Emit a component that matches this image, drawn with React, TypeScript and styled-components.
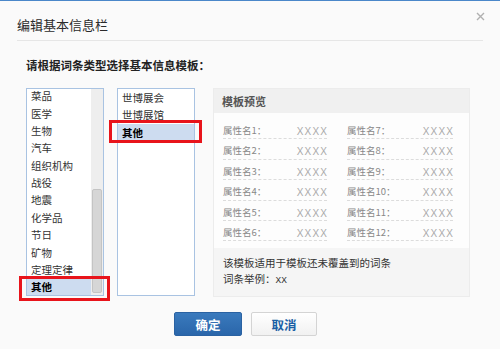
import React from "react";
import styled, { createGlobalStyle } from "styled-components";

const GlobalStyle = createGlobalStyle`
  html, body {
    margin: 0;
    padding: 0;
    background: #fafafa;
  }
  body {
    font-family: "Noto Sans CJK SC", "Liberation Sans", sans-serif;
  }
`;

const leftItems = [
  "菜品",
  "医学",
  "生物",
  "汽车",
  "组织机构",
  "战役",
  "地震",
  "化学品",
  "节日",
  "矿物",
  "定理定律",
  "其他",
];

const midItems = ["世博展会", "世博展馆", "其他"];

const App = () => {
  const attrs = Array.from({ length: 12 }, (_, i) => `属性名${i + 1}：`);

  return (
    <>
      <GlobalStyle />
      <Dialog>
        <Header>
          <Title>编辑基本信息栏</Title>
        </Header>
        <CloseButton aria-label="关闭">
          <svg width="9" height="9" viewBox="0 0 9 9">
            <path d="M1 1L8 8M8 1L1 8" stroke="#b0b0b0" strokeWidth="1.4" />
          </svg>
        </CloseButton>

        <Body>
          <Subtitle>请根据词条类型选择基本信息模板：</Subtitle>
          <Panels>
            <ListBox $gap={13}>
              <ListItems>
                <ItemsInner $shift={-1.7}>
                  {leftItems.map((item, i) => (
                    <Item key={item} $selected={i === leftItems.length - 1}>
                      {item}
                    </Item>
                  ))}
                </ItemsInner>
              </ListItems>
              <ScrollTrack>
                <ScrollThumb />
              </ScrollTrack>
              <Marker $left={-8} $top={187} $w={91} $h={25} />
            </ListBox>

            <ListBox $gap={18}>
              <ListItems>
                <ItemsInner $shift={0}>
                  {midItems.map((item, i) => (
                    <Item key={item} $selected={i === 2}>
                      {item}
                    </Item>
                  ))}
                </ItemsInner>
              </ListItems>
              <Marker $left={-9} $top={31} $w={93} $h={23} />
            </ListBox>

            <Preview>
              <PreviewHead>模板预览</PreviewHead>
              <AttrGrid>
                {attrs.map((a) => (
                  <AttrRow key={a}>
                    <AttrLabel>{a}</AttrLabel>
                    <AttrValue>XXXX</AttrValue>
                  </AttrRow>
                ))}
              </AttrGrid>
              <PreviewNote>
                <div>该模板适用于模板还未覆盖到的词条</div>
                <div>
                  词条举例：<Mono>XX</Mono>
                </div>
              </PreviewNote>
            </Preview>
          </Panels>
        </Body>

        <Footer>
          <Button $primary $w={68}>
            确定
          </Button>
          <Button $w={66}>取消</Button>
        </Footer>
      </Dialog>
    </>
  );
};

export default App;

const Dialog = styled.div`
  position: relative;
  width: 500px;
  height: 349px;
  box-sizing: border-box;
  border-top: 1px solid #4a87c9;
  background: #fafafa;
`;

const Header = styled.div`
  margin: 0 17px;
  padding-top: 9px;
  height: 30px;
  display: flex;
  align-items: center;
  border-bottom: 1px solid #e6e6e6;
`;

const Title = styled.h1`
  margin: 0;
  font-size: 13px;
  font-weight: normal;
  line-height: 16px;
  color: #2a2a2a;
`;

const CloseButton = styled.button`
  position: absolute;
  top: 10px;
  right: 14px;
  width: 11px;
  height: 11px;
  padding: 0;
  border: none;
  background: none;
  display: flex;
  align-items: center;
  justify-content: center;
  cursor: pointer;
`;

const Body = styled.div`
  padding: 16px 0 0 26px;
`;

const Subtitle = styled.div`
  font-size: 11.5px;
  font-weight: bold;
  line-height: 16px;
  color: #222;
  margin-bottom: 15px;
`;

const Panels = styled.div`
  display: flex;
  align-items: flex-start;
`;

const ListBox = styled.div<{ $gap: number }>`
  position: relative;
  width: 78px;
  height: 208px;
  box-sizing: border-box;
  border: 1px solid #a9c3e2;
  background: #fff;
  display: flex;
  margin-right: ${(p) => p.$gap}px;
`;

const ListItems = styled.div`
  flex: 1;
  overflow: hidden;
`;

const ItemsInner = styled.div<{ $shift: number }>`
  margin-top: ${(p) => p.$shift}px;
`;

const Item = styled.div<{ $selected?: boolean }>`
  height: 17.36px;
  line-height: 17.36px;
  padding-left: 4px;
  font-size: 10.5px;
  white-space: nowrap;
  color: ${(p) => (p.$selected ? "#000" : "#333")};
  font-weight: ${(p) => (p.$selected ? "bold" : "normal")};
  background: ${(p) => (p.$selected ? "#cddcf0" : "transparent")};
`;

const ScrollTrack = styled.div`
  width: 12px;
  background: #eeeeee;
  display: flex;
  flex-direction: column;
`;

const ScrollThumb = styled.div`
  margin: 100px 1px 0;
  height: 104px;
  box-sizing: border-box;
  background: #d6d6d6;
  border: 1px solid #c4c4c4;
  border-radius: 2px;
`;

const Marker = styled.div<{ $left: number; $top: number; $w: number; $h: number }>`
  position: absolute;
  left: ${(p) => p.$left}px;
  top: ${(p) => p.$top}px;
  width: ${(p) => p.$w}px;
  height: ${(p) => p.$h}px;
  box-sizing: border-box;
  border: 3px solid #e8141b;
  pointer-events: none;
`;

const Preview = styled.div`
  width: 257px;
  height: 209px;
  box-sizing: border-box;
  border: 1px solid #ececec;
  background: #fdfdfd;
  display: flex;
  flex-direction: column;
`;

const PreviewHead = styled.div`
  height: 24px;
  line-height: 24px;
  padding-left: 8px;
  background: #f0f0f0;
  font-size: 11px;
  font-weight: bold;
  color: #555;
`;

const AttrGrid = styled.div`
  padding: 6px 16px 7px 9px;
  display: grid;
  grid-template-columns: 104px 106px;
  grid-template-rows: repeat(6, 20.4px);
  grid-auto-flow: column;
  column-gap: 20px;
`;

const AttrRow = styled.div`
  display: flex;
  justify-content: space-between;
  align-items: flex-start;
  box-sizing: border-box;
  padding-top: 3px;
  line-height: 16px;
  border-bottom: 1px dashed #dcdcdc;
`;

const AttrLabel = styled.span`
  font-size: 9.5px;
  color: #888;
`;

const AttrValue = styled.span`
  font-family: "Liberation Sans", sans-serif;
  font-size: 10px;
  letter-spacing: 1.2px;
  margin-right: -1.2px;
  color: #aaa;
  padding-top: 2px;
`;

const PreviewNote = styled.div`
  flex: 1;
  background: #f5f5f5;
  padding: 7px 9px 0;
  font-size: 10.5px;
  line-height: 16px;
  color: #333;
`;

const Mono = styled.span`
  font-family: "Liberation Mono", monospace;
  font-size: 9.5px;
`;

const Footer = styled.div`
  display: flex;
  justify-content: center;
  gap: 9px;
  padding-right: 9px;
  margin-top: 15px;
`;

const Button = styled.button<{ $primary?: boolean; $w: number }>`
  width: ${(p) => p.$w}px;
  height: 24px;
  box-sizing: border-box;
  padding: 0;
  border-radius: 2px;
  font-family: "Noto Sans CJK SC", sans-serif;
  font-size: 12.5px;
  font-weight: bold;
  cursor: pointer;
  border: 1px solid ${(p) => (p.$primary ? "#2a62a2" : "#d4d4d4")};
  color: ${(p) => (p.$primary ? "#fff" : "#1a5fa5")};
  background: ${(p) =>
    p.$primary
      ? "linear-gradient(#3a7abd, #2a66aa)"
      : "linear-gradient(#ffffff, #f1f1f1)"};
`;
